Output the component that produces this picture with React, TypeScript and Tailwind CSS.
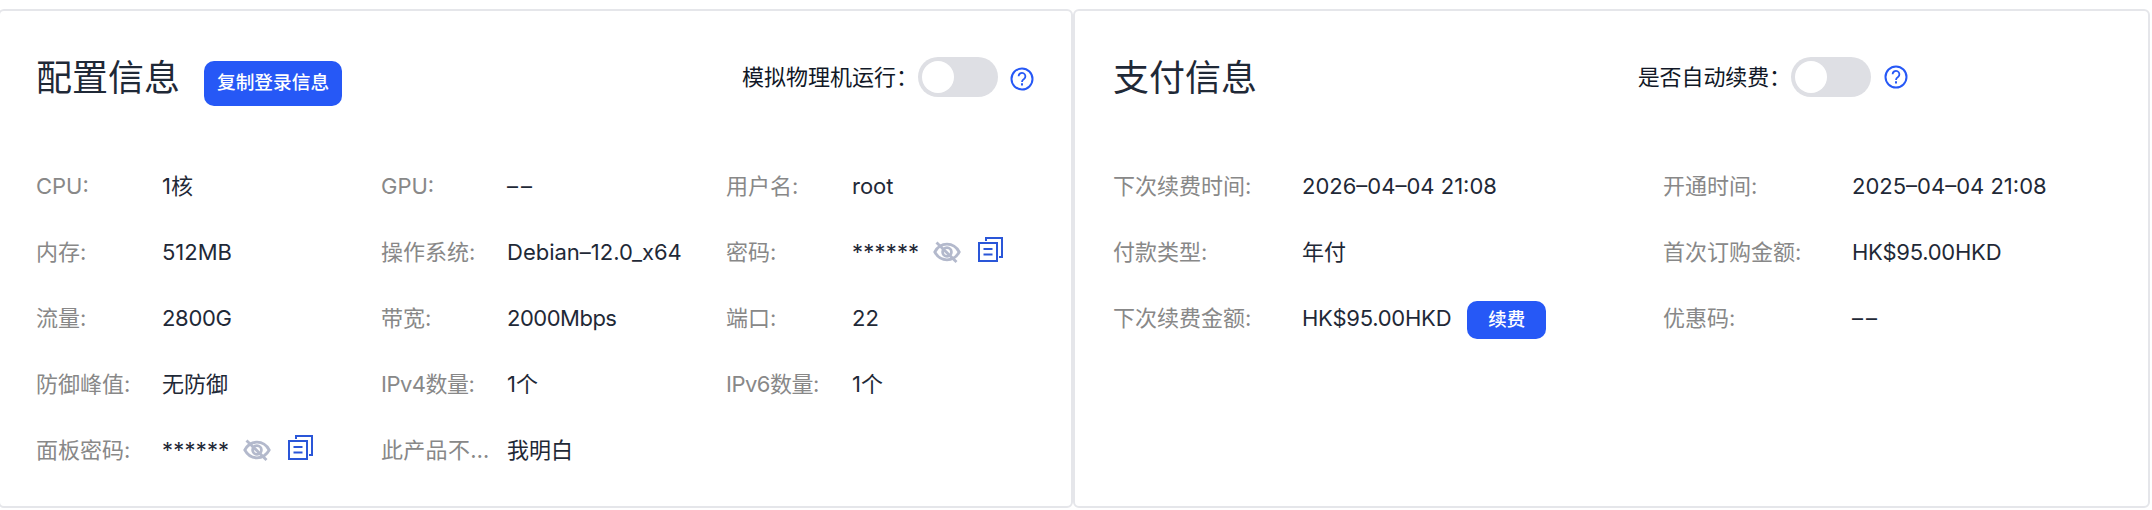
import type { ReactNode } from "react";

type Item = {
  label: string;
  value: string;
  secret?: boolean;
  action?: string;
  labelTracking?: string;
  valueTracking?: string;
};

const configItems: Item[] = [
  { label: "CPU:", value: "1核" },
  { label: "GPU:", value: "––", valueTracking: "tracking-[3px]" },
  { label: "用户名:", value: "root" },
  { label: "内存:", value: "512MB" },
  { label: "操作系统:", value: "Debian–12.0_x64" },
  { label: "密码:", value: "******", secret: true, valueTracking: "tracking-[0.2px]" },
  { label: "流量:", value: "2800G", valueTracking: "tracking-[-0.3px]" },
  { label: "带宽:", value: "2000Mbps", valueTracking: "tracking-[-0.5px]" },
  { label: "端口:", value: "22" },
  { label: "防御峰值:", value: "无防御" },
  { label: "IPv4数量:", value: "1个", labelTracking: "tracking-[-0.5px]" },
  { label: "IPv6数量:", value: "1个", labelTracking: "tracking-[-0.5px]" },
  { label: "面板密码:", value: "******", secret: true, valueTracking: "tracking-[0.2px]" },
  { label: "此产品不…", value: "我明白", labelTracking: "tracking-[0.3px]" },
];

const paymentItems: Item[] = [
  { label: "下次续费时间:", value: "2026–04–04 21:08" },
  { label: "开通时间:", value: "2025–04–04 21:08" },
  { label: "付款类型:", value: "年付" },
  { label: "首次订购金额:", value: "HK$95.00HKD", valueTracking: "tracking-[-0.25px]" },
  { label: "下次续费金额:", value: "HK$95.00HKD", action: "续费", valueTracking: "tracking-[-0.25px]" },
  { label: "优惠码:", value: "––", valueTracking: "tracking-[3px]" },
];

function HelpIcon({ className = "" }: { className?: string }) {
  return (
    <svg
      viewBox="0 0 24 24"
      fill="none"
      stroke="#2658f6"
      strokeWidth="2"
      className={`size-6 shrink-0 ${className}`}
    >
      <circle cx="12" cy="12" r="10.5" />
      <path d="M8.600 9.300a3.400 3.400 0 1 1 5.400 2.700c-1.300.9-2 1.500-2 3" strokeWidth="1.8" />
      <path d="M12 16.200v2.200" />
    </svg>
  );
}

function EyeOffIcon() {
  return (
    <svg viewBox="0 0 28 22" fill="none" stroke="#b3b9cc" strokeWidth="2.8" className="h-[22px] w-7">
      <path d="M1.800 11C4.500 6 9 3.200 14 3.200S23.500 6 26.200 11C23.500 16 19 18.800 14 18.800S4.500 16 1.800 11z" />
      <circle cx="14" cy="11" r="4.400" />
      <path d="M3.500 1.500l20 19.500" />
    </svg>
  );
}

function CopyIcon() {
  return (
    <svg viewBox="0 0 26 26" fill="none" stroke="#2a56d8" strokeWidth="2" className="size-[26px]">
      <path d="M2 7h18v18H2z" />
      <path d="M9 5V2h16v19h-3" />
      <path d="M6.500 13h9M6.500 18.500h9" />
    </svg>
  );
}

function Toggle() {
  return (
    <button
      role="switch"
      aria-checked="false"
      className="flex h-10 w-20 shrink-0 items-center rounded-full bg-[#dedfe4] p-1"
    >
      <span className="size-8 rounded-full bg-white" />
    </button>
  );
}

function Field({ item, labelClass }: { item: Item; labelClass: string }) {
  return (
    <div className="flex h-[66px] items-center whitespace-nowrap">
      <dt className={`shrink-0 text-[#888888] ${labelClass} ${item.labelTracking ?? ""}`}>{item.label}</dt>
      <dd className="flex items-center">
        <span className={`${item.secret ? "w-[81px]" : ""} ${item.valueTracking ?? ""}`}>{item.value}</span>
        {item.secret && (
          <>
            <EyeOffIcon />
            <span className="-mt-1.5 ml-4">
              <CopyIcon />
            </span>
          </>
        )}
        {item.action && (
          <button className="ml-4 mt-1 h-[38px] w-[79px] rounded-[10px] bg-[#2658f6] text-[18.5px] font-medium text-white">
            {item.action}
          </button>
        )}
      </dd>
    </div>
  );
}

function Card({ className, children }: { className: string; children: ReactNode }) {
  return (
    <section className={`h-[499px] shrink-0 rounded-md border-2 border-[#e5e6ea] ${className}`}>{children}</section>
  );
}

export default function App() {
  return (
    <main className="flex h-[510px] w-[2152px] overflow-hidden bg-white pt-[9px] font-['Inter','Noto_Sans_CJK_SC',sans-serif] text-[22px] text-[#1f2937]">
      <Card className="-ml-0.5 w-[1075px] pl-9">
        <header className="flex h-[142px] items-start">
          <h2 className="mt-10 text-[36px] leading-[54px]">配置信息</h2>
          <button className="ml-6 mt-[50px] h-[45px] w-[138px] rounded-[10px] bg-[#2658f6] text-[18.7px] font-medium text-white">
            复制登录信息
          </button>
          <div className="ml-auto mr-[37px] mt-[46px] flex h-10 items-center text-[#111827]">
            <span>模拟物理机运行：</span>
            <Toggle />
            <HelpIcon className="ml-3 mt-1" />
          </div>
        </header>
        <dl className="grid grid-cols-[345px_345px_345px]">
          {configItems.map((item) => (
            <Field key={item.label} item={item} labelClass="w-[126px]" />
          ))}
        </dl>
      </Card>

      <Card className="w-[1077px] pl-[38px]">
        <header className="flex h-[142px] items-start">
          <h2 className="mt-10 text-[36px] leading-[54px]">支付信息</h2>
          <div className="ml-auto mr-[240px] mt-[46px] flex h-10 items-center text-[#111827]">
            <span className="tracking-[-0.1px]">是否自动续费：</span>
            <Toggle />
            <HelpIcon className="ml-[13px]" />
          </div>
        </header>
        <dl className="grid grid-cols-[550px_1fr]">
          {paymentItems.map((item) => (
            <Field key={item.label} item={item} labelClass="w-[189px]" />
          ))}
        </dl>
      </Card>
    </main>
  );
}
